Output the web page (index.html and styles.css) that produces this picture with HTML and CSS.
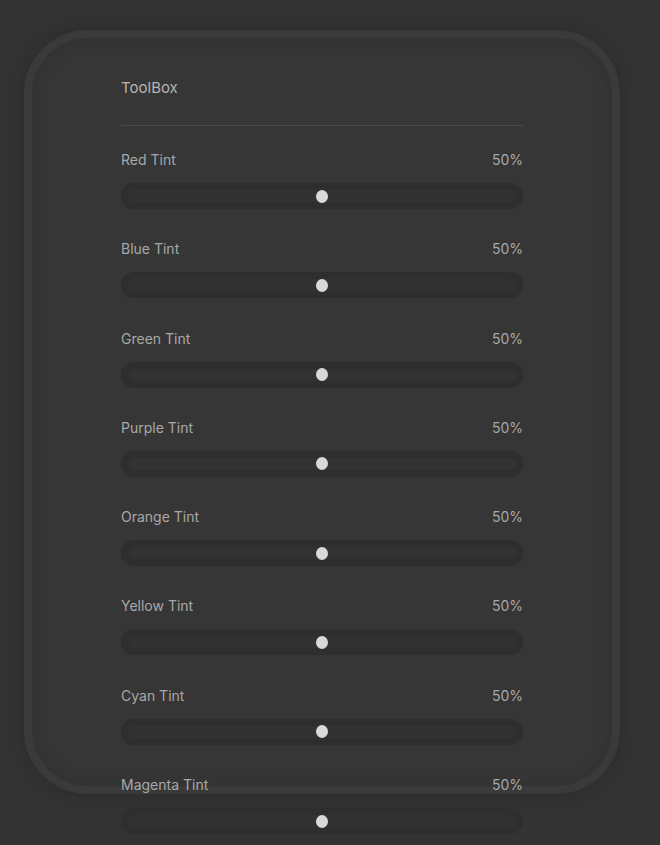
FILE: index.html
```html
<!DOCTYPE html>
<html>
<head>
<meta charset="utf-8">
<link rel="stylesheet" href="styles.css">
</head>
<body>
<div class="card">
  <div class="title">ToolBox</div>
  <div class="divider"></div>
  <div class="row">
    <div class="head"><span>Red Tint</span><span>50%</span></div>
    <div class="track"><div class="thumb"></div></div>
  </div>
  <div class="row">
    <div class="head"><span>Blue Tint</span><span>50%</span></div>
    <div class="track"><div class="thumb"></div></div>
  </div>
  <div class="row">
    <div class="head"><span>Green Tint</span><span>50%</span></div>
    <div class="track"><div class="thumb"></div></div>
  </div>
  <div class="row">
    <div class="head"><span>Purple Tint</span><span>50%</span></div>
    <div class="track"><div class="thumb"></div></div>
  </div>
  <div class="row">
    <div class="head"><span>Orange Tint</span><span>50%</span></div>
    <div class="track"><div class="thumb"></div></div>
  </div>
  <div class="row">
    <div class="head"><span>Yellow Tint</span><span>50%</span></div>
    <div class="track"><div class="thumb"></div></div>
  </div>
  <div class="row">
    <div class="head"><span>Cyan Tint</span><span>50%</span></div>
    <div class="track"><div class="thumb"></div></div>
  </div>
  <div class="row">
    <div class="head"><span>Magenta Tint</span><span>50%</span></div>
    <div class="track"><div class="thumb"></div></div>
  </div>
</div>
</body>
</html>
```
FILE: styles.css
```css
html, body {
  margin: 0;
  padding: 0;
  background: #333333;
  height: 100%;
  overflow: hidden;
}
body {
  font-family: Inter, "Noto Sans", sans-serif;
  padding: 30px 0 0 24px;
  box-sizing: border-box;
}
.card {
  width: 596px;
  height: 764px;
  box-sizing: border-box;
  border: 8px solid #3a3a3a;
  border-radius: 64px;
  background: #363636;
  padding: 40px 89px 0 89px;
  box-shadow: 0 0 18px rgba(0,0,0,0.18), inset 0 0 16px rgba(0,0,0,0.12);
}
.title {
  font-size: 15px;
  line-height: 20px;
  color: #b4b4b4;
  height: 20px;
}
.divider {
  height: 1px;
  background: #4a4a4a;
  margin-top: 27px;
  margin-bottom: 24px;
}
.row {
  margin-bottom: 30.3px;
}
.head {
  display: flex;
  justify-content: space-between;
  font-size: 14px;
  line-height: 20px;
  color: #a8a8a8;
}
.track {
  position: relative;
  margin-top: 13px;
  height: 26px;
  border-radius: 13px;
  background: #323232;
  box-shadow: inset 0 0 0 7px #2e2e2e;
}
.thumb {
  position: absolute;
  left: 50%;
  top: 50%;
  width: 12px;
  height: 13px;
  margin-left: -6px;
  margin-top: -6.5px;
  border-radius: 50%;
  background: #d9d9d9;
}
```
